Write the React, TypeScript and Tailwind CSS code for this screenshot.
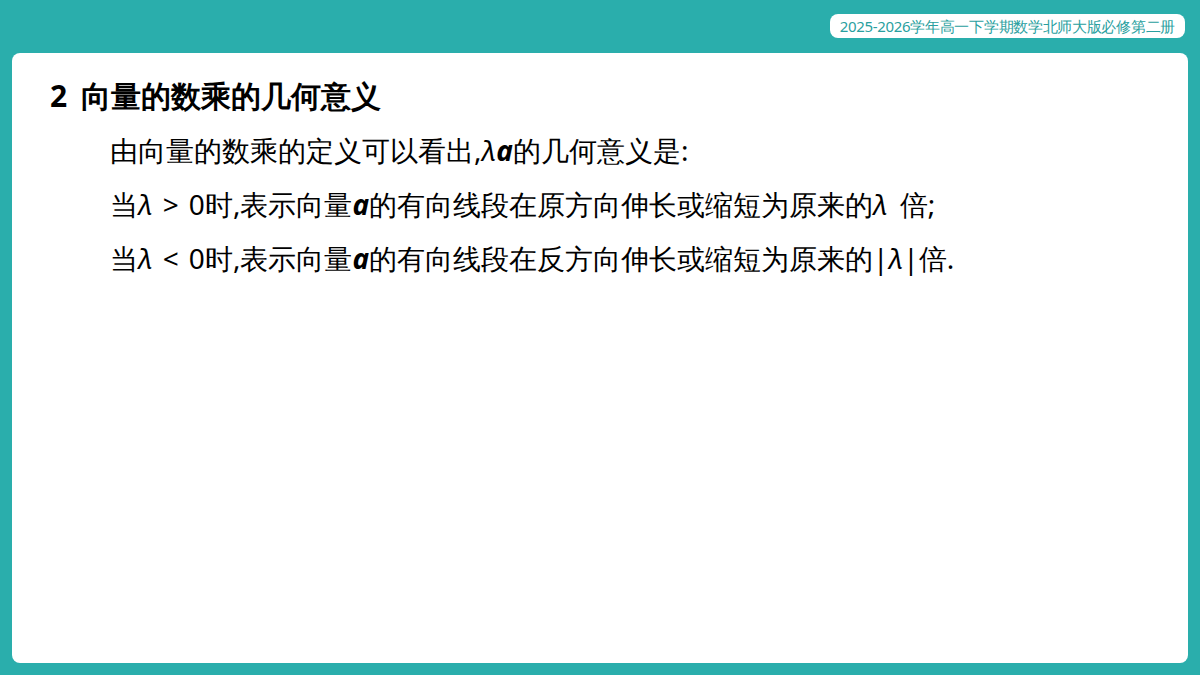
const Lam = () => <span className="italic font-['Liberation_Serif',serif]">λ</span>;
const A = () => <span className="font-bold italic font-['Liberation_Serif',serif]">a</span>;

export default function App() {
  return (
    <div className="w-[1200px] h-[675px] bg-[#2aaeac] flex flex-col px-[12px] pb-[12px] font-['Noto_Sans_CJK_SC',sans-serif]">
      <div className="h-[53px] flex items-start justify-end pt-[14px] pr-[3px]">
        <div className="bg-white rounded-[8px] h-[24px] px-[10px] flex items-center text-[15px] text-[#2a9fa0] tracking-[-0.3px]">
          2025-2026学年高一下学期数学北师大版必修第二册
        </div>
      </div>
      <div className="flex-1 bg-white rounded-[8px] pt-[22px] pl-[38px] text-black">
        <div className="flex items-center text-[30px] font-bold h-[40px]">
          <span className="mr-[14px] font-['Liberation_Serif',serif]">2</span>
          <span>向量的数乘的几何意义</span>
        </div>
        <div className="pl-[60px] mt-[8px] text-[28px] leading-[54px]">
          <div>由向量的数乘的定义可以看出,<Lam /><A />的几何意义是:</div>
          <div>当<Lam /><span className="font-['Liberation_Serif',serif] px-[10px]">&gt;</span><span className="font-['Liberation_Serif',serif]">0</span>时,表示向量<A />的有向线段在原方向伸长或缩短为原来的<Lam /><span className="pl-[12px]">倍;</span></div>
          <div>当<Lam /><span className="font-['Liberation_Serif',serif] px-[10px]">&lt;</span><span className="font-['Liberation_Serif',serif]">0</span>时,表示向量<A />的有向线段在反方向伸长或缩短为原来的<span className="font-['Liberation_Serif',serif]">|<i>λ</i>|</span>倍.</div>
        </div>
      </div>
    </div>
  );
}
